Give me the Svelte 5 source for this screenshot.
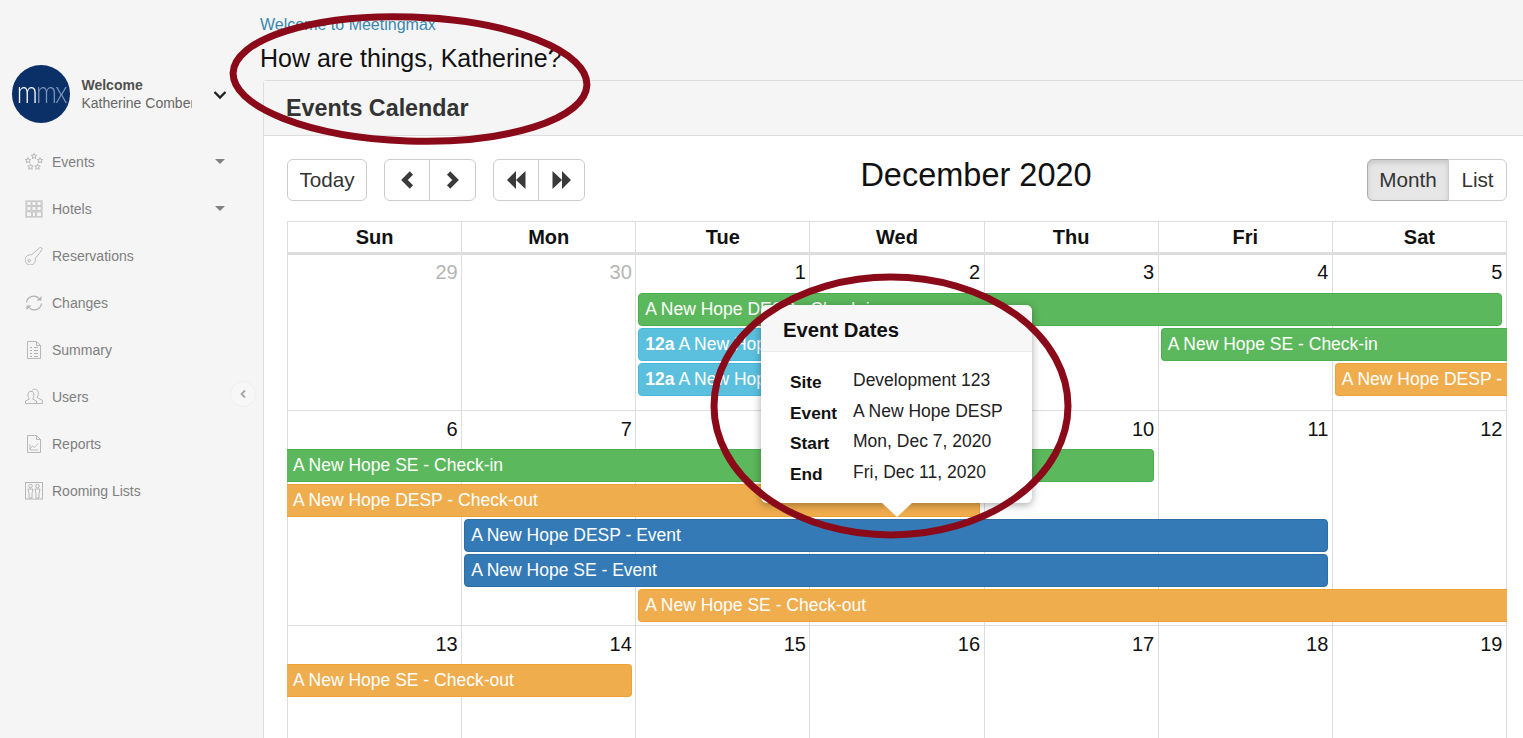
<script>
  const star = (cx, cy, r) => {
    let p = [];
    for (let i = 0; i < 10; i++) {
      const a = -Math.PI / 2 + (i * Math.PI) / 5;
      const q = i % 2 ? r * 0.45 : r;
      p.push(`${(cx + q * Math.cos(a)).toFixed(2)},${(cy + q * Math.sin(a)).toFixed(2)}`);
    }
    return p.join(' ');
  };
  const stars = [[9, 3.2, 2.9], [3, 7.5, 2.9], [15, 7.5, 2.9], [5.5, 14, 2.9], [12.5, 14, 2.9]];
  const nav = [
    { label: 'Events', icon: 'events', caret: true },
    { label: 'Hotels', icon: 'hotels', caret: true },
    { label: 'Reservations', icon: 'key' },
    { label: 'Changes', icon: 'changes' },
    { label: 'Summary', icon: 'summary' },
    { label: 'Users', icon: 'users' },
    { label: 'Reports', icon: 'reports' },
    { label: 'Rooming Lists', icon: 'rooming' }
  ];
  const heads = ['Sun', 'Mon', 'Tue', 'Wed', 'Thu', 'Fri', 'Sat'];
  const weeks = [
    {
      rows: 3, cls: 'w1',
      days: [[29, 1], [30, 1], [1], [2], [3], [4], [5]],
      events: [
        { r: 1, c: 3, s: 5, k: 'green', t: 'A New Hope DESP - Check-in' },
        { r: 2, c: 3, s: 1, k: 'cyan', b: '12a', t: 'A New Hope DESP' },
        { r: 2, c: 6, s: 2, k: 'green', t: 'A New Hope SE - Check-in', open: 'r' },
        { r: 3, c: 3, s: 1, k: 'cyan', b: '12a', t: 'A New Hope SE' },
        { r: 3, c: 7, s: 1, k: 'orange', t: 'A New Hope DESP - Check-out', open: 'r' }
      ]
    },
    {
      rows: 5, cls: 'w2',
      days: [[6], [7], [8], [9], [10], [11], [12]],
      events: [
        { r: 1, c: 1, s: 5, k: 'green', t: 'A New Hope SE - Check-in', open: 'l' },
        { r: 2, c: 1, s: 4, k: 'orange', t: 'A New Hope DESP - Check-out', open: 'l' },
        { r: 3, c: 2, s: 5, k: 'blue', t: 'A New Hope DESP - Event' },
        { r: 4, c: 2, s: 5, k: 'blue', t: 'A New Hope SE - Event' },
        { r: 5, c: 3, s: 5, k: 'orange', t: 'A New Hope SE - Check-out', open: 'r' }
      ]
    },
    {
      rows: 3, cls: 'w3',
      days: [[13], [14], [15], [16], [17], [18], [19]],
      events: [{ r: 1, c: 1, s: 2, k: 'orange', t: 'A New Hope SE - Check-out', open: 'l' }]
    }
  ];
  const details = [
    ['Site', 'Development 123'],
    ['Event', 'A New Hope DESP'],
    ['Start', 'Mon, Dec 7, 2020'],
    ['End', 'Fri, Dec 11, 2020']
  ];
</script>

<div class="page">
  <aside class="sidebar">
    <div class="profile">
      <div class="avatar"><span class="mark"><span class="m1">m</span><span class="m2">mx</span></span></div>
      <div class="who">
        <strong>Welcome</strong>
        <span>Katherine Comber</span>
      </div>
      <svg class="chev" width="14" height="10" viewBox="0 0 14 10"><path d="M1.500 2 7 7.500 12.500 2" fill="none" stroke="#222" stroke-width="2.400"/></svg>
    </div>
    <nav>
      {#each nav as item}
        <div class="item">
          <svg class="ico" width="18" height="18" viewBox="0 0 18 18" fill="none" stroke="#b0b0b0" stroke-width="0.9">
            {#if item.icon === 'events'}
              {#each stars as s}<polygon points={star(s[0], s[1], s[2])} />{/each}
            {:else if item.icon === 'hotels'}
              <rect x="0" y="0" width="18" height="18" fill="#d9d9d9" stroke="none" />
              <path d="M2 1.500h4v4H2zM7 1.500h4v4H7zM12 1.500h4v4h-4zM2 6.500h4v4H2zM7 6.500h4v4H7zM12 6.500h4v4h-4zM1.500 12h5v4.500h-5zM7.500 12h3v4.500h-3zM11.500 12h5v4.500h-5z" fill="#f5f5f5" stroke="#b5b5b5" stroke-width="0.6"/>
            {:else if item.icon === 'key'}
              <path d="M6.500 7.800 14.800 .7c1.300-.7 2.700.5 2.200 1.900L10.300 11.500a5.200 5.200 0 1 1-3.800-3.700z" />
              <circle cx="4.200" cy="13.700" r="1.300" />
            {:else if item.icon === 'changes'}
              <path d="M1.500 8.500A7.300 7.300 0 0 1 14.500 5M16.500 9.500A7.300 7.300 0 0 1 3.500 13" stroke-width="1.200"/>
              <path d="M11.500 6.500h5V2zM6.500 11.500h-5V16z" stroke="none" fill="#b5b5b5"/>
            {:else if item.icon === 'summary'}
              <path d="M2.500 .5h9l4 4v13h-13zM11.500 .5v4h4" />
              <path d="M5 6.500h2M9 6.500h4M5 9.500h2M9 9.500h4M5 12.500h2M9 12.500h4M5 15.500h2M9 15.500h4" stroke-width="1"/>
            {:else if item.icon === 'users'}
              <path d="M.5 15.500V13l4-2c-2-2-2-6 0-7.500h3c1.500 1.500 2 5.500 0 7.500l4 2v2.500z" />
              <path d="M7 2.500c1-1.500 4-2 5.500 0 1.500 2 1 5.500-.5 7l5.500 2.800v3.200H12" />
            {:else if item.icon === 'reports'}
              <path d="M2.500 .5h9l4 4v13h-13zM11.500 .5v4h4" />
              <path d="M5 14l2.500-3 2 1.500 3.500-4M5 9v6h8" stroke-width="0.8"/>
            {:else}
              <rect x="0.5" y="0.5" width="17" height="16.500" />
              <circle cx="5.500" cy="4" r="1.800" />
              <circle cx="12.500" cy="4" r="1.800" />
              <path d="M3 7h5l-1 4.500V16H4v-4.500zM10 7h5l-1 4.500V16h-3v-4.500z" />
            {/if}
          </svg>
          <span class="lbl">{item.label}</span>
          {#if item.caret}<span class="caret"></span>{/if}
        </div>
      {/each}
    </nav>
  </aside>

  <main>
    <div class="crumb">Welcome to Meetingmax</div>
    <h1>How are things, Katherine?</h1>
    <section class="panel">
      <header class="phead">Events Calendar</header>
      <div class="pbody">
        <div class="toolbar">
          <div class="tleft">
            <button class="btn today">Today</button>
            <div class="group">
              <button class="btn icon" aria-label="Previous"><svg width="16" height="18" viewBox="0 0 16 18"><path d="M12.400 2 5.400 9l7 7" fill="none" stroke="#3a3a3a" stroke-width="4.600"/></svg></button>
              <button class="btn icon" aria-label="Next"><svg width="16" height="18" viewBox="0 0 16 18"><path d="M3.600 2l7 7-7 7" fill="none" stroke="#3a3a3a" stroke-width="4.600"/></svg></button>
            </div>
            <div class="group">
              <button class="btn icon" aria-label="Previous year"><svg width="20" height="18" viewBox="0 0 20 18"><path d="M10 0v18L1 9zM19.500 0v18l-9.500-9z" fill="#3a3a3a"/></svg></button>
              <button class="btn icon" aria-label="Next year"><svg width="20" height="18" viewBox="0 0 20 18"><path d="M.5 0v18l9.500-9zM10 0v18l9-9z" fill="#3a3a3a"/></svg></button>
            </div>
          </div>
          <h2>December 2020</h2>
          <div class="group views">
            <button class="btn active">Month</button>
            <button class="btn">List</button>
          </div>
        </div>

        <div class="cal">
          <div class="heads">
            {#each heads as h}<div class="hc">{h}</div>{/each}
          </div>
          {#each weeks as w}
            <div class="week {w.cls}" style="grid-template-rows: var(--top) repeat({w.rows}, 35px) var(--end)">
              {#each w.days as d, i}
                <div class="day" class:other={d[1]} style="grid-column:{i + 1}; grid-row:1 / {w.rows + 3}">{d[0]}</div>
              {/each}
              {#each w.events as e}
                <div class="ev {e.k} {e.open ? 'open-' + e.open : ''}" style="grid-row:{e.r + 1}; grid-column:{e.c} / span {e.s}">
                  {#if e.b}<b>{e.b}</b>{/if}{e.t}
                </div>
              {/each}
            </div>
          {/each}
        </div>
      </div>
    </section>
  </main>

  <button class="collapse" aria-label="Collapse sidebar">
    <svg width="8" height="10" viewBox="0 0 8 10"><path d="M6 1.500 2.500 5 6 8.500" fill="none" stroke="#a5a5a5" stroke-width="1.800"/></svg>
  </button>

  <div class="pop">
    <div class="pophead">Event Dates</div>
    <dl>
      {#each details as d}
        <dt>{d[0]}</dt>
        <dd>{d[1]}</dd>
      {/each}
    </dl>
    <span class="arrow"></span>
  </div>

  <svg class="rings" width="1523" height="738" viewBox="0 0 1523 738">
    <ellipse cx="410" cy="79" rx="177" ry="62" transform="rotate(2 410 79)" />
    <ellipse cx="891" cy="406" rx="177" ry="129" />
  </svg>
</div>

<style>
  :global(body) {
    margin: 0;
    background: #f5f5f5;
  }
  .page {
    position: relative;
    display: flex;
    width: 1523px;
    height: 738px;
    overflow: hidden;
    background: #f5f5f5;
    font-family: "Liberation Sans", Arial, sans-serif;
    color: #111;
  }
  .sidebar {
    flex: 0 0 260px;
    padding-top: 65px;
    box-sizing: border-box;
  }
  .profile {
    display: flex;
    align-items: center;
    height: 58px;
    padding-left: 12px;
  }
  .avatar {
    flex: 0 0 58px;
    height: 58px;
    border-radius: 50%;
    background: #0b3068;
    display: flex;
    align-items: center;
    justify-content: center;
    font-family: Lato, "Open Sans", sans-serif;
    font-weight: 300;
    font-size: 31px;
    letter-spacing: -2px;
    padding-bottom: 6px;
    box-sizing: border-box;
  }
  .mark {
    display: block;
    transform: scaleX(0.84);
  }
  .m1 { color: #fff; }
  .m2 { color: #7f97bb; }
  .who {
    width: 111px;
    margin-left: 11px;
    overflow: hidden;
    white-space: nowrap;
    font-size: 14px;
    line-height: 18px;
    color: #666;
    display: flex;
    flex-direction: column;
    margin-top: -1px;
  }
  .who strong { color: #505050; }
  .chev { margin-left: 21px; margin-top: 2px; }
  nav { margin-top: 15px; }
  .item {
    position: relative;
    display: flex;
    align-items: center;
    height: 47px;
    padding-left: 25px;
    font-size: 14px;
    color: #808080;
  }
  .ico { flex: none; }
  .lbl { margin-left: 9px; }
  .caret {
    margin-left: auto;
    margin-right: 35px;
    width: 0;
    height: 0;
    border-left: 5px solid transparent;
    border-right: 5px solid transparent;
    border-top: 5px solid #808080;
  }
  main {
    flex: 1;
    min-width: 0;
  }
  .crumb {
    font-size: 16px;
    color: #3a87ad;
    line-height: 18px;
    margin-top: 16px;
  }
  h1 {
    margin: 6px 0 0;
    font-size: 25px;
    font-weight: 400;
    line-height: 36px;
    color: #111;
    height: 40px;
  }
  .panel {
    margin-left: 3px;
    border-left: 1px solid #ddd;
    border-top: 1px solid #ddd;
    border-top-left-radius: 4px;
  }
  .phead {
    height: 54px;
    line-height: 54px;
    padding-left: 22px;
    background: #f5f5f5;
    border-bottom: 1px solid #ddd;
    font-size: 23.300px;
    font-weight: 700;
    color: #333;
  }
  .pbody {
    background: #fff;
    height: 603px;
    padding: 23px 16px 0 23px;
    overflow: hidden;
  }
  .toolbar {
    display: flex;
    justify-content: space-between;
    align-items: flex-start;
    height: 62px;
  }
  .tleft { display: flex; gap: 17px; }
  .btn {
    box-sizing: border-box;
    height: 42px;
    margin: 0;
    background: #fff;
    border: 1px solid #ccc;
    border-radius: 6px;
    font: 400 20.700px "Liberation Sans", Arial, sans-serif;
    color: #333;
    padding: 0;
    display: flex;
    align-items: center;
    justify-content: center;
  }
  .today { width: 80px; }
  .group { display: flex; }
  .group .btn:first-child { border-radius: 6px 0 0 6px; }
  .group .btn:last-child { border-radius: 0 6px 6px 0; margin-left: -1px; }
  .icon { width: 46px; }
  .icon:last-child { width: 47px; }
  .views .btn:first-child { width: 82px; }
  .views .btn:last-child { width: 59px; }
  .active {
    background: #e6e6e6;
    border-color: #adadad;
    box-shadow: inset 0 3px 5px rgba(0, 0, 0, .125);
  }
  h2 {
    margin: -5px 0 0;
    font-size: 32.500px;
    font-weight: 400;
    line-height: 42px;
    color: #111;
  }
  .cal { width: 1220px; }
  .heads {
    display: grid;
    grid-template-columns: repeat(7, 1fr);
    border: 1px solid #ddd;
    border-bottom: 3px solid #ddd;
    border-right: 0;
    height: 30px;
  }
  .hc {
    text-align: center;
    font-size: 20px;
    font-weight: 700;
    line-height: 30px;
    border-right: 1px solid #ddd;
  }
  .week {
    display: grid;
    grid-template-columns: repeat(7, 1fr);
    border-left: 1px solid #ddd;
    border-bottom: 1px solid #ddd;
    --top: 38px;
    --end: 12px;
  }
  .w2 { --end: 1px; }
  .w3 { --end: 30px; }
  .day {
    border-right: 1px solid #ddd;
    text-align: right;
    font-size: 20px;
    line-height: 23px;
    padding: 6px 3.500px 0 0;
    color: #111;
  }
  .w2 .day, .w3 .day { padding-top: 7px; }
  .other { color: #b5b5b5; }
  .ev {
    box-sizing: border-box;
    height: 33px;
    margin: 0 4.500px 2px 2px;
    padding: 0 6px;
    border: 1px solid;
    border-radius: 4px;
    color: #fff;
    font-size: 17.500px;
    line-height: 30px;
    white-space: nowrap;
    overflow: hidden;
  }
  .ev b { margin-right: 4px; }
  .open-l { margin-left: -1px; border-left: 0; border-radius: 0 4px 4px 0; }
  .open-r { margin-right: 0; border-right: 0; border-radius: 4px 0 0 4px; }
  .green { background: #5cb85c; border-color: #4cae4c; }
  .cyan { background: #5bc0de; border-color: #46b8da; }
  .orange { background: #f0ad4e; border-color: #eea236; }
  .blue { background: #337ab7; border-color: #2e6da4; }
  .collapse {
    position: absolute;
    left: 230px;
    top: 381px;
    width: 26px;
    height: 26px;
    padding: 0;
    border-radius: 50%;
    border: 1px solid #eee;
    background: #f7f7f7;
    display: flex;
    align-items: center;
    justify-content: center;
  }
  .pop {
    position: absolute;
    left: 761px;
    top: 305px;
    width: 271px;
    height: 198px;
    background: #fff;
    border-radius: 6px;
    box-shadow: 0 2px 8px rgba(0, 0, 0, .35);
  }
  .pophead {
    height: 47px;
    line-height: 50px;
    box-sizing: border-box;
    padding-left: 22px;
    background: #f7f7f7;
    border-bottom: 1px solid #ebebeb;
    border-radius: 6px 6px 0 0;
    font-size: 20.300px;
    font-weight: 700;
  }
  dl {
    display: grid;
    grid-template-columns: 63px 1fr;
    grid-auto-rows: 30.600px;
    margin: 13px 0 0 29px;
    font-size: 17.500px;
    line-height: 30px;
  }
  dt { font-weight: 700; padding-top: 2px; font-size: 17.300px; }
  dd { margin: 0; color: #222; }
  .arrow {
    position: absolute;
    left: 121px;
    bottom: -14px;
    width: 0;
    height: 0;
    border-left: 15px solid transparent;
    border-right: 15px solid transparent;
    border-top: 14px solid #fff;
  }
  .rings {
    position: absolute;
    left: 0;
    top: 0;
    pointer-events: none;
    filter: blur(0.4px);
  }
  .rings ellipse {
    fill: none;
    stroke: #8b0a1a;
    stroke-width: 7;
  }
</style>
